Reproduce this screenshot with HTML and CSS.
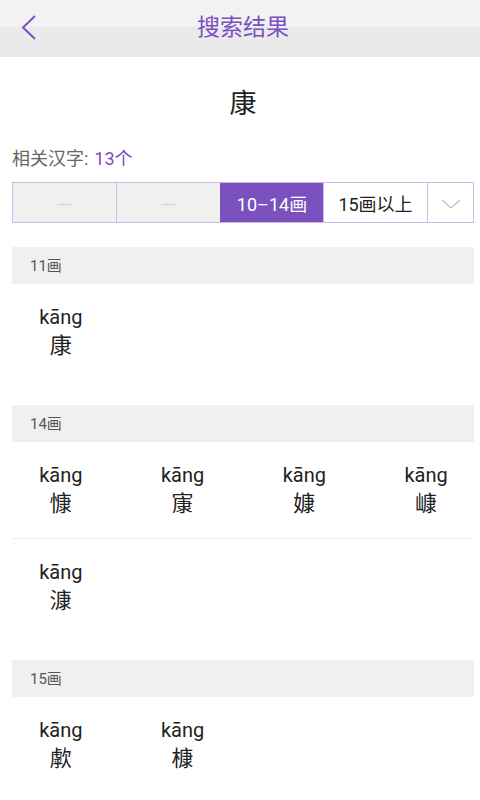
FILE: index.html
```html
<!DOCTYPE html>
<html lang="zh-CN">
<head>
<meta charset="utf-8">
<title>搜索结果</title>
<link rel="stylesheet" href="styles.css">
</head>
<body>
<header class="topbar">
  <span class="back">
    <svg width="16" height="28" viewBox="0 0 16 28"><path d="M14 2 L2 13.5 L14 25" fill="none" stroke="#7a4fc4" stroke-width="2"/></svg>
  </span>
  <h1 class="title">搜索结果</h1>
</header>
<main class="page">
  <div class="hero">康</div>
  <div class="count">相关汉字:<span class="num">13个</span></div>
  <div class="tabs">
    <div class="tab tab-off">—</div>
    <div class="tab tab-off">—</div>
    <div class="tab tab-on">10–14画</div>
    <div class="tab">15画以上</div>
    <div class="tab tab-more">
      <svg width="20" height="10" viewBox="0 0 20 10"><path d="M1 1 L10 9 L19 1" fill="none" stroke="#bdbdbd" stroke-width="1.2"/></svg>
    </div>
  </div>

  <section class="group">
    <div class="group-head">11画</div>
    <div class="row">
      <div class="item"><span class="py">kāng</span><span class="hz">康</span></div>
    </div>
  </section>

  <section class="group">
    <div class="group-head">14画</div>
    <div class="row">
      <div class="item"><span class="py">kāng</span><span class="hz">慷</span></div>
      <div class="item"><span class="py">kāng</span><span class="hz">㝩</span></div>
      <div class="item"><span class="py">kāng</span><span class="hz">嫝</span></div>
      <div class="item"><span class="py">kāng</span><span class="hz">嵻</span></div>
    </div>
    <div class="divider"></div>
    <div class="row">
      <div class="item"><span class="py">kāng</span><span class="hz">漮</span></div>
    </div>
  </section>

  <section class="group">
    <div class="group-head">15画</div>
    <div class="row">
      <div class="item"><span class="py">kāng</span><span class="hz">歑</span></div>
      <div class="item"><span class="py">kāng</span><span class="hz">槺</span></div>
    </div>
  </section>
</main>
</body>
</html>
```
FILE: styles.css
```css
html, body {
  margin: 0;
  padding: 0;
  overflow: hidden;
  background: #ffffff;
}
body {
  width: 480px;
  height: 800px;
  font-family: Roboto, "Noto Sans CJK SC", sans-serif;
  color: #222;
}
.topbar {
  height: 57px;
  display: flex;
  align-items: center;
  background: linear-gradient(#f2f2f2 0, #f2f2f2 27px, #eaeaea 27px, #eaeaea 57px);
  position: relative;
}
.back {
  width: 16px;
  height: 28px;
  margin-left: 21px;
  margin-top: -1px;
  display: flex;
}
.title {
  position: absolute;
  left: 6px;
  right: 0;
  top: 0;
  line-height: 56px;
  margin: 0;
  text-align: center;
  font-size: 23px;
  font-weight: normal;
  color: #7a4fc4;
  pointer-events: none;
}
.page {
  padding: 0 6px 0 12px;
}
.hero {
  text-align: center;
  font-size: 27px;
  line-height: 36px;
  margin-top: 29px;
  color: #222;
}
.count {
  margin-top: 24px;
  font-size: 18px;
  line-height: 26px;
  color: #666;
}
.count .num {
  color: #7a4fc4;
  margin-left: 6px;
}
.tabs {
  margin-top: 10px;
  display: grid;
  grid-template-columns: 103px 104px 103px 104px 1fr;
  border: 1px solid #cbb9e8;
  height: 39px;
}
.tab {
  display: flex;
  align-items: center;
  justify-content: center;
  font-size: 18px;
  color: #222;
  background: #fff;
  border-left: 1px solid #cbb9e8;
}
.tab:first-child {
  border-left: none;
}
.tab-off {
  background: #f0f0f0;
  color: #cfcfcf;
  font-family: "Liberation Sans", sans-serif;
  font-size: 14px;
}
.tab-on {
  background: #7b52bd;
  color: #fff;
  border-left-color: #7b52bd;
}
.tab-more {
  padding-top: 2px;
}
.group {
  margin-top: 25px;
}
.tabs + .group {
  margin-top: 24px;
}
.group-head {
  height: 37px;
  line-height: 38px;
  background: #f0f0f0;
  padding-left: 18px;
  font-size: 15px;
  color: #555;
}
.row {
  display: grid;
  grid-template-columns: repeat(4, 1fr);
  width: 487px;
  margin-left: -12px;
  height: 96px;
}
.item {
  display: flex;
  flex-direction: column;
  align-items: center;
  justify-content: center;
}
.py {
  font-size: 20px;
  line-height: 26px;
  color: #222;
}
.hz {
  font-size: 22px;
  line-height: 29px;
  color: #222;
  margin-top: 1px;
}
.divider {
  height: 1px;
  background: #eeeeee;
}
```
